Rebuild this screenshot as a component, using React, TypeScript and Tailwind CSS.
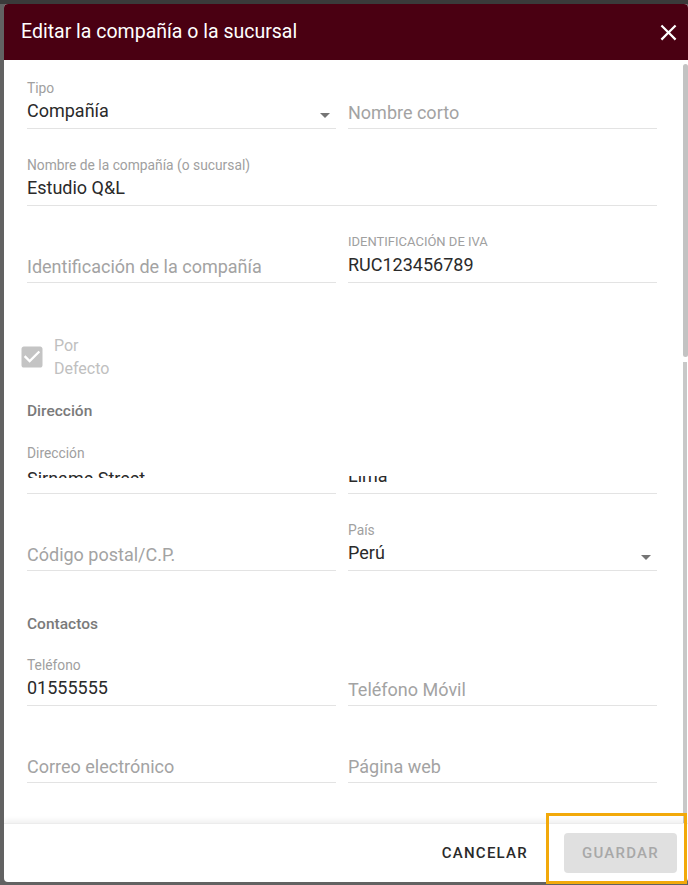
import React from 'react';

interface FieldProps {
  label?: string;
  value?: string;
  placeholder?: string;
  select?: boolean;
  clip?: 'top' | 'bottom';
  upper?: boolean;
}

const Field: React.FC<FieldProps> = ({ label, value, placeholder, select, clip, upper }) => {
  const clipClass =
    clip === 'top'
      ? 'translate-y-[3px] [clip-path:inset(0_0_13px_0)]'
      : clip === 'bottom'
        ? '[clip-path:inset(12px_0_0_0)]'
        : '';
  return (
    <div className="flex flex-col border-b border-[#e3e3e3]">
      <div className={`h-4 leading-4 text-[#a0a0a0] ${upper ? 'uppercase text-[13px]' : 'text-[13.8px]'}`}>
        {label}
      </div>
      <div className="mt-[3px] mb-[5px] flex h-6 items-center justify-between">
        {value ? (
          <span className={`text-[18px] leading-6 text-[#2a2a2a] ${clipClass}`}>{value}</span>
        ) : (
          <span className="translate-y-[1.5px] text-[18px] leading-6 text-[#a3a3a3]">{placeholder}</span>
        )}
        {select && (
          <svg className="mr-[6px] h-[5px] w-[10px] translate-y-1" viewBox="0 0 10 5">
            <path d="M0 0h10L5 5z" fill="#757575" />
          </svg>
        )}
      </div>
    </div>
  );
};

const Row: React.FC<{ className?: string; children: React.ReactNode }> = ({ className, children }) => (
  <div className={`grid grid-cols-2 gap-x-3 ${className ?? ''}`}>{children}</div>
);

export default function App() {
  return (
    <div className="relative flex h-[885px] w-[688px] flex-col overflow-hidden bg-[#626262] font-[Roboto,sans-serif]">
      <div className="h-1 w-full shrink-0 bg-[#3a3a3a]" />

      <div className="ml-1 flex h-[878px] w-[684px] flex-col overflow-hidden rounded-[4px] bg-white">
        {/* header */}
        <div className="flex h-14 shrink-0 items-center justify-between bg-[#4a0012] pl-[17px] pr-[6px]">
          <h2 className="text-[19.5px] font-normal text-white">Editar la compañía o la sucursal</h2>
          <svg className="h-[27px] w-[27px]" viewBox="0 0 24 24" fill="#ffffff">
            <path d="M19 6.41L17.59 5 12 10.59 6.41 5 5 6.41 10.59 12 5 17.59 6.41 19 12 13.41 17.59 19 19 17.59 13.41 12z" />
          </svg>
        </div>

        {/* body */}
        <div className="flex h-[763px] shrink-0 overflow-hidden">
          <div className="flex-1 pl-[23px] pr-[26px] pt-5">
            <Row>
              <Field label="Tipo" value="Compañía" select />
              <Field placeholder="Nombre corto" />
            </Row>
            <div className="mt-7">
              <Field label="Nombre de la compañía (o sucursal)" value="Estudio Q&L" />
            </div>
            <Row className="mt-7">
              <Field placeholder="Identificación de la compañía" />
              <Field label="Identificación de IVA" value="RUC123456789" upper />
            </Row>

            <div className="ml-[-9px] mt-[51px] flex items-center">
              <svg className="h-7 w-7" viewBox="0 0 24 24">
                <path
                  fill="#c4c4c4"
                  d="M19 3H5c-1.11 0-2 .9-2 2v14c0 1.1.89 2 2 2h14c1.11 0 2-.9 2-2V5c0-1.1-.89-2-2-2zm-9 14l-5-5 1.41-1.41L10 14.17l7.59-7.59L19 8l-9 9z"
                />
              </svg>
              <span className="ml-2 w-[60px] text-[16px] leading-[23px] text-[#c0c0c0]">Por Defecto</span>
            </div>

            <div className="mt-[21px] text-[15.5px] font-medium leading-5 text-[#7a7a7a]">Dirección</div>
            <Row className="mt-6">
              <Field label="Dirección" value="Sirname Street" clip="top" />
              <Field value="Lima" clip="bottom" />
            </Row>
            <Row className="mt-7">
              <Field placeholder="Código postal/C.P." />
              <Field label="País" value="Perú" select />
            </Row>

            <div className="mt-[43px] text-[15.5px] font-medium leading-5 text-[#7a7a7a]">Contactos</div>
            <Row className="mt-[23px]">
              <Field label="Teléfono" value="01555555" />
              <Field placeholder="Teléfono Móvil" />
            </Row>
            <Row className="mt-7">
              <Field placeholder="Correo electrónico" />
              <Field placeholder="Página web" />
            </Row>
          </div>

          {/* scrollbar */}
          <div className="flex w-[5px] flex-col pt-1">
            <div className="h-[293px] w-[5px] rounded-[3px] bg-[#c3c3c3]" />
            <div className="mt-[5px] w-1 flex-1 bg-[#c8c8c8]" />
          </div>
        </div>

        {/* footer */}
        <div className="flex flex-1 items-center justify-end border-t border-[#ececec] pr-[11px] shadow-[0_-3px_5px_rgba(0,0,0,0.06)]">
          <button className="mr-5 h-10 px-4 text-[15px] font-medium tracking-[1.25px] text-[#2a2a2a]">CANCELAR</button>
          <button className="h-10 w-[113px] rounded-[4px] bg-[#e0e0e0] text-[15px] font-medium tracking-[1.25px] text-[#a8a8a8]">
            GUARDAR
          </button>
        </div>
      </div>

      {/* highlight */}
      <div className="absolute left-[546px] top-[813px] h-[71px] w-[141px] border-[3px] border-[#f2a90a]" />
    </div>
  );
}
